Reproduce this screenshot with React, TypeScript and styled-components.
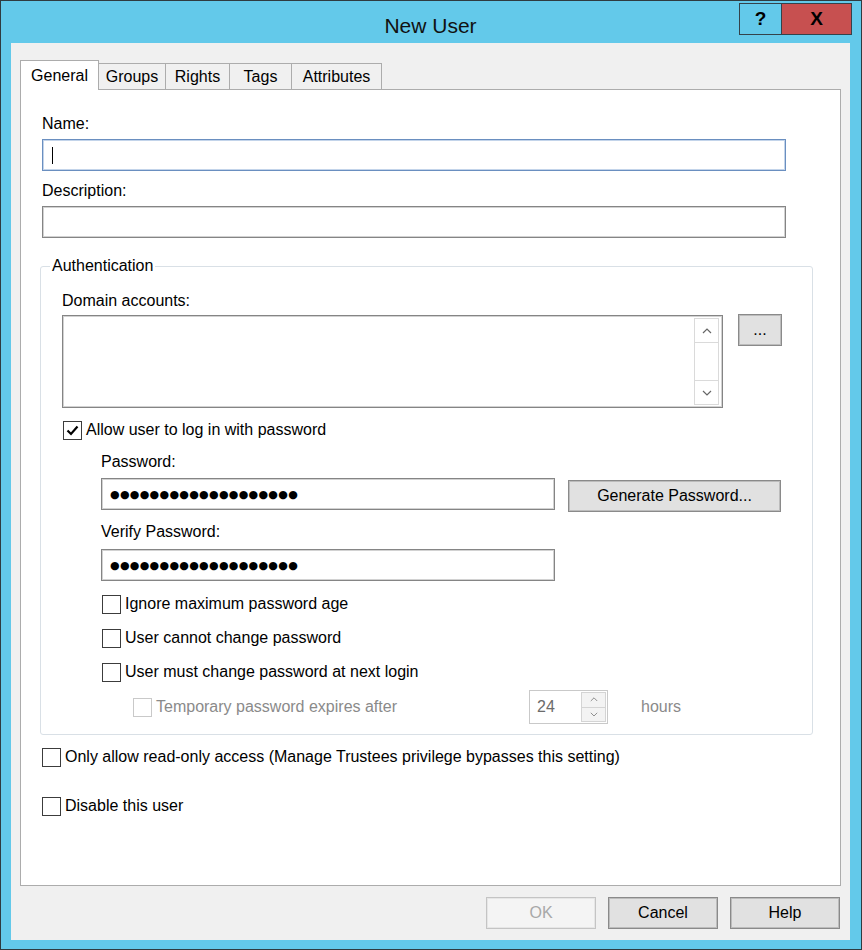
import React from "react";
import styled, { createGlobalStyle } from "styled-components";

const FONT = `"Liberation Sans", Arial, sans-serif`;

const GlobalStyle = createGlobalStyle`
  html, body { margin: 0; padding: 0; background: #63c9ea; }
  body { font-family: ${FONT}; font-size: 16px; color: #000; }
  * { box-sizing: border-box; }
`;

const Window = styled.div`
  width: 862px;
  height: 950px;
  background: #63c9ea;
  border: 1px solid #2f3b40;
  display: flex;
  flex-direction: column;
  padding: 0 11px 9px 10px;
`;

const TitleBar = styled.div`
  height: 42px;
  display: grid;
  grid-template-columns: 1fr auto 1fr;
  align-items: start;
`;

const Title = styled.div`
  grid-column: 2;
  padding-top: 13px;
  font-size: 21px;
  line-height: 24px;
  color: #111;
`;

const CaptionGroup = styled.div`
  grid-column: 3;
  justify-self: end;
  display: flex;
  margin: 2px -2px 0 0;
`;

const CaptionButton = styled.div<{ $close?: boolean }>`
  width: ${(p) => (p.$close ? 71 : 43)}px;
  height: 32px;
  border: 1px solid #34424a;
  background: ${(p) => (p.$close ? "#c75050" : "transparent")};
  display: flex;
  align-items: center;
  justify-content: center;
  font: bold 19px ${FONT};
  color: #000;
  & + & { margin-left: -1px; }
`;

const Client = styled.div`
  flex: 1;
  background: #f0f0f0;
  display: flex;
  flex-direction: column;
  padding: 17px 9px 0 9px;
`;

const TabStrip = styled.div`
  display: flex;
  align-items: flex-end;
  height: 29px;
  position: relative;
  z-index: 1;
`;

const Tab = styled.div<{ $active?: boolean; $w: number }>`
  width: ${(p) => p.$w}px;
  height: ${(p) => (p.$active ? 30 : 26)}px;
  margin-bottom: ${(p) => (p.$active ? -1 : 0)}px;
  border: 1px solid #acacac;
  border-bottom: none;
  background: ${(p) => (p.$active ? "#fff" : "#f0f0f0")};
  position: relative;
  z-index: ${(p) => (p.$active ? 2 : 1)};
  display: flex;
  align-items: center;
  justify-content: center;
  font-size: 16px;
  & + & { margin-left: -1px; }
`;

const Panel = styled.div`
  width: 821px;
  height: 797px;
  border: 1px solid #acacac;
  background: #fff;
  padding: 0 27px 0 19px;
  display: flex;
  flex-direction: column;
`;

const Label = styled.div<{ $mt: number; $ml?: number }>`
  margin-top: ${(p) => p.$mt}px;
  margin-left: ${(p) => p.$ml ?? 0}px;
  height: 20px;
  line-height: 20px;
  font-size: 16px;
`;

const TextBox = styled.div<{ $focus?: boolean; $w: number; $mt?: number; $ml?: number }>`
  width: ${(p) => p.$w}px;
  height: 32px;
  flex: none;
  margin-top: ${(p) => p.$mt ?? 0}px;
  margin-left: ${(p) => p.$ml ?? 0}px;
  border: 1px solid ${(p) => (p.$focus ? "#6a8fc0" : "#858585")};
  box-shadow: inset 0 0 0 1px ${(p) => (p.$focus ? "#c3d4ea" : "#d2d2d2")};
  background: #fff;
  display: flex;
  align-items: center;
  padding-left: 8px;
`;

const Caret = styled.span`
  width: 1px;
  height: 17px;
  margin-left: 1px;
  background: #000;
`;

const Dots = styled.span`
  font-family: "DejaVu Sans", sans-serif;
  font-size: 11px;
  letter-spacing: 0.3px;
  color: #000;
`;

const GroupBox = styled.fieldset`
  margin: 18px 0 0 0;
  padding: 15px 28px 10px 21px;
  border: 1px solid #d9e0e6;
  border-radius: 3px;
  display: flex;
  flex-direction: column;
  min-width: 0;
`;

const Legend = styled.legend`
  margin-left: -12px;
  padding: 0 2px;
  height: 20px;
  line-height: 20px;
  font-size: 16px;
`;

const Row = styled.div<{ $mt?: number; $ml?: number }>`
  display: flex;
  align-items: flex-start;
  margin-top: ${(p) => p.$mt ?? 0}px;
  margin-left: ${(p) => p.$ml ?? 0}px;
`;

const ListBox = styled.div`
  width: 661px;
  height: 93px;
  border: 1px solid #858585;
  box-shadow: inset 0 0 0 1px #d2d2d2;
  background: #fff;
  display: flex;
  justify-content: flex-end;
  padding: 2px 3px 2px 0;
`;

const ScrollBar = styled.div`
  width: 25px;
  display: flex;
  flex-direction: column;
`;

const ScrollButton = styled.div`
  height: 25px;
  border: 1px solid #dadada;
  display: flex;
  align-items: center;
  justify-content: center;
  color: #777;
`;

const ScrollTrack = styled.div`
  flex: 1;
  border-left: 1px solid #dadada;
  border-right: 1px solid #dadada;
`;

const PushButton = styled.div<{ $w: number; $mt?: number; $ml?: number; $disabled?: boolean }>`
  width: ${(p) => p.$w}px;
  height: 32px;
  flex: none;
  margin-top: ${(p) => p.$mt ?? 0}px;
  margin-left: ${(p) => p.$ml ?? 0}px;
  border: 1px solid ${(p) => (p.$disabled ? "#c4c4c4" : "#8a8a8a")};
  box-shadow: inset 0 0 0 1px ${(p) => (p.$disabled ? "#e6e6e6" : "#bcbcbc")};
  background: ${(p) => (p.$disabled ? "#f4f4f4" : "#e1e1e1")};
  color: ${(p) => (p.$disabled ? "#a8a8a8" : "#000")};
  display: flex;
  align-items: center;
  justify-content: center;
  font-size: 16px;
`;

const CheckRow = styled.label<{ $mt: number; $ml: number; $w?: number; $disabled?: boolean }>`
  display: flex;
  align-items: center;
  gap: 4px;
  height: 20px;
  flex: none;
  margin-top: ${(p) => p.$mt}px;
  margin-left: ${(p) => p.$ml}px;
  width: ${(p) => (p.$w ? `${p.$w}px` : "auto")};
  color: ${(p) => (p.$disabled ? "#8a8a8a" : "#000")};
  font-size: 16px;
`;

const Box = styled.span<{ $disabled?: boolean }>`
  width: 19px;
  height: 19px;
  flex: none;
  border: 1px solid ${(p) => (p.$disabled ? "#c9c9c9" : "#3c3c3c")};
  background: #fff;
  display: flex;
  align-items: center;
  justify-content: center;
`;

const TempRow = styled.div`
  display: flex;
  align-items: center;
  height: 34px;
  margin-top: 8px;
  margin-left: 71px;
`;

const Spinner = styled.div`
  width: 79px;
  height: 34px;
  border: 1px solid #c9c9c9;
  background: #fff;
  display: flex;
`;

const SpinValue = styled.div`
  flex: 1;
  display: flex;
  align-items: center;
  padding-left: 7px;
  color: #6b6b6b;
  font-size: 16px;
`;

const SpinArrows = styled.div`
  width: 26px;
  display: flex;
  flex-direction: column;
  padding: 1px 1px 1px 0;
`;

const SpinArrow = styled.div`
  flex: 1;
  border: 1px solid #d4d4d4;
  background: #f3f3f3;
  display: flex;
  align-items: center;
  justify-content: center;
  & + & { margin-top: -1px; }
`;

const Hours = styled.span`
  margin-left: 33px;
  color: #8a8a8a;
  font-size: 16px;
`;

const ButtonBar = styled.div`
  display: flex;
  justify-content: flex-end;
  gap: 12px;
  margin-top: 11px;
  padding-right: 1px;
`;

const Chevron = ({ up, size = 10, color = "#666" }: { up?: boolean; size?: number; color?: string }) => (
  <svg width={size} height={size * 0.6} viewBox="0 0 10 6">
    <path
      d={up ? "M1 5 L5 1 L9 5" : "M1 1 L5 5 L9 1"}
      fill="none"
      stroke={color}
      strokeWidth={1.2}
    />
  </svg>
);

const CheckMark = () => (
  <svg width="15" height="15" viewBox="0 0 15 15">
    <path d="M2.5 7.5 L6 11 L12.5 3.5" fill="none" stroke="#000" strokeWidth="2.2" />
  </svg>
);

const Check = ({
  children, mt, ml, checked, disabled, w,
}: { children: React.ReactNode; mt: number; ml: number; checked?: boolean; disabled?: boolean; w?: number }) => (
  <CheckRow $mt={mt} $ml={ml} $disabled={disabled} $w={w}>
    <Box $disabled={disabled}>{checked && <CheckMark />}</Box>
    <span>{children}</span>
  </CheckRow>
);

const DOTS = "●".repeat(19);

export default function App() {
  return (
    <>
      <GlobalStyle />
      <Window>
        <TitleBar>
          <Title>New User</Title>
          <CaptionGroup>
            <CaptionButton>?</CaptionButton>
            <CaptionButton $close>X</CaptionButton>
          </CaptionGroup>
        </TitleBar>
        <Client>
          <TabStrip>
            <Tab $active $w={79}>General</Tab>
            <Tab $w={68}>Groups</Tab>
            <Tab $w={65}>Rights</Tab>
            <Tab $w={63}>Tags</Tab>
            <Tab $w={91}>Attributes</Tab>
          </TabStrip>
          <Panel>
            <Label $mt={24} $ml={2}>Name:</Label>
            <TextBox $focus $w={744} $mt={5} $ml={2}><Caret /></TextBox>
            <Label $mt={10} $ml={2}>Description:</Label>
            <TextBox $w={744} $mt={5} $ml={2} />
            <GroupBox>
              <Legend>Authentication</Legend>
              <Label $mt={0}>Domain accounts:</Label>
              <Row $mt={4}>
                <ListBox>
                  <ScrollBar>
                    <ScrollButton><Chevron up /></ScrollButton>
                    <ScrollTrack />
                    <ScrollButton><Chevron /></ScrollButton>
                  </ScrollBar>
                </ListBox>
                <PushButton $w={44} $mt={-1} $ml={15}>...</PushButton>
              </Row>
              <Check mt={12} ml={1} checked>Allow user to log in with password</Check>
              <Label $mt={12} $ml={39}>Password:</Label>
              <Row $mt={6} $ml={39}>
                <TextBox $w={454}><Dots>{DOTS}</Dots></TextBox>
                <PushButton $w={213} $mt={2} $ml={13}>Generate Password...</PushButton>
              </Row>
              <Label $mt={10} $ml={39}>Verify Password:</Label>
              <TextBox $w={454} $mt={7} $ml={39}><Dots>{DOTS}</Dots></TextBox>
              <Check mt={13} ml={40}>Ignore maximum password age</Check>
              <Check mt={14} ml={40}>User cannot change password</Check>
              <Check mt={14} ml={40}>User must change password at next login</Check>
              <TempRow>
                <Check mt={0} ml={0} w={396} disabled>Temporary password expires after</Check>
                <Spinner>
                  <SpinValue>24</SpinValue>
                  <SpinArrows>
                    <SpinArrow><Chevron up size={8} color="#8a8a8a" /></SpinArrow>
                    <SpinArrow><Chevron size={8} color="#8a8a8a" /></SpinArrow>
                  </SpinArrows>
                </Spinner>
                <Hours>hours</Hours>
              </TempRow>
            </GroupBox>
            <Check mt={12} ml={2}>Only allow read-only access (Manage Trustees privilege bypasses this setting)</Check>
            <Check mt={29} ml={2}>Disable this user</Check>
          </Panel>
          <ButtonBar>
            <PushButton $w={110} $disabled>OK</PushButton>
            <PushButton $w={110}>Cancel</PushButton>
            <PushButton $w={110}>Help</PushButton>
          </ButtonBar>
        </Client>
      </Window>
    </>
  );
}
